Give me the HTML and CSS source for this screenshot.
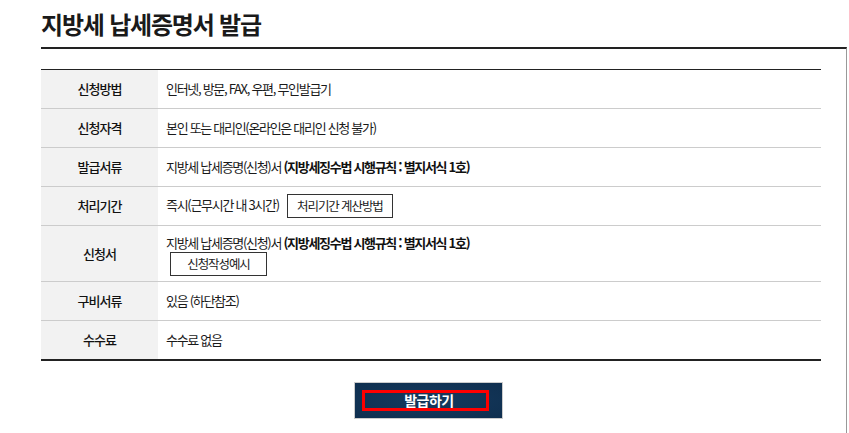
FILE: index.html
```html
<!DOCTYPE html>
<html lang="ko">
<head>
    <meta charset="UTF-8">
    <meta name="viewport" content="width=device-width, initial-scale=1.0">
    <title>지방세 납세증명서 발급</title>
    <link rel="stylesheet" href="styles.css">
</head>
<body>
    <div class="page">
        <h1 class="page-title">지방세 납세증명서 발급</h1>

        <div class="content">
            <table class="info-table">
                <tr>
                    <th>신청방법</th>
                    <td>인터넷, 방문, FAX, 우편, 무인발급기</td>
                </tr>
                <tr>
                    <th>신청자격</th>
                    <td>본인 또는 대리인(온라인은 대리인 신청 불가)</td>
                </tr>
                <tr>
                    <th>발급서류</th>
                    <td>지방세 납세증명(신청)서 <strong>(지방세징수법 시행규칙 : 별지서식 1호)</strong></td>
                </tr>
                <tr>
                    <th>처리기간</th>
                    <td>즉시(근무시간 내 3시간) <button class="line-btn">처리기간 계산방법</button></td>
                </tr>
                <tr class="tall">
                    <th>신청서</th>
                    <td>
                        <div>지방세 납세증명(신청)서 <strong>(지방세징수법 시행규칙 : 별지서식 1호)</strong></div>
                        <button class="line-btn sample-btn">신청작성예시</button>
                    </td>
                </tr>
                <tr>
                    <th>구비서류</th>
                    <td>있음 (하단참조)</td>
                </tr>
                <tr>
                    <th>수수료</th>
                    <td>수수료 없음</td>
                </tr>
            </table>

            <div class="actions">
                <button class="submit-btn"><span class="mark">발급하기</span></button>
            </div>
        </div>
    </div>
</body>
</html>
```

FILE: styles.css
```css
body {
    margin: 0;
    font-family: "Noto Sans CJK KR", "Noto Sans", sans-serif;
    color: #333;
    background: #fff;
}
.page {
    padding-left: 41px;
}
.page-title {
    margin: 0;
    padding: 6px 0 6px;
    font-size: 24px;
    line-height: 35px;
    font-weight: 700;
    letter-spacing: -1.2px;
    color: #1a1a1a;
}
.content {
    width: 805px;
    border-top: 2px solid #222;
    border-right: 1px solid #999;
    padding-top: 20px;
    padding-bottom: 20px;
}
.info-table {
    width: 780px;
    border-collapse: collapse;
    border-top: 1px solid #222;
    border-bottom: 2px solid #222;
    font-size: 13px;
    letter-spacing: -1.3px;
}
.info-table th,
.info-table td {
    height: 38px;
    padding: 0;
    border-bottom: 1px solid #ccc;
    line-height: 18px;
}
.info-table th {
    width: 117px;
    background: #f2f2f2;
    font-weight: 500;
    color: #111;
    text-align: center;
    letter-spacing: -1px;
}
.info-table td {
    padding-left: 8px;
    text-align: left;
    color: #1a1a1a;
}
.info-table strong {
    font-weight: 700;
    color: #111;
}
.info-table tr.tall td {
    height: 53px;
    padding-top: 2px;
}
.line-btn {
    margin-left: 6px;
    height: 24px;
    padding: 0 9px;
    border: 1px solid #333;
    background: #fff;
    font-family: inherit;
    font-size: 12.5px;
    line-height: 18px;
    letter-spacing: -1.1px;
    color: #222;
    vertical-align: middle;
}
.sample-btn {
    display: block;
    width: 97px;
    margin: 0 0 0 4px;
}
.actions {
    display: flex;
    justify-content: center;
    padding-top: 21px;
    padding-right: 31px;
}
.submit-btn {
    width: 149px;
    height: 37px;
    padding: 0 13px 0 7px;
    border: 1px solid #ccc;
    background: radial-gradient(ellipse at center, #153a5e 0%, #0f2f4f 100%);
    font-family: inherit;
    font-size: 14px;
    font-weight: 700;
    letter-spacing: -0.5px;
    color: #fff;
}
.mark {
    display: block;
    height: 21px;
    padding-left: 8px;
    line-height: 15px;
    border: 3px solid #f00;
    box-sizing: border-box;
}
```
